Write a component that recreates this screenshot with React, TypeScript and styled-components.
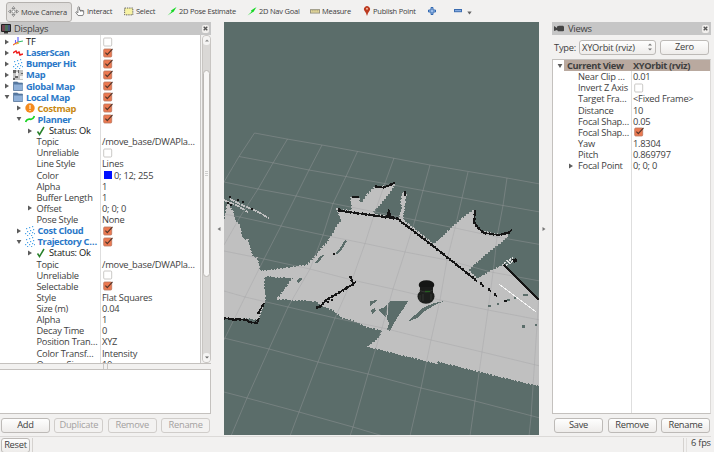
import React from 'react';
import styled, { createGlobalStyle, css } from 'styled-components';

const GlobalStyle = createGlobalStyle`
  * { box-sizing: border-box; }
  body {
    margin: 0;
    background: #f2f1f0;
    color: #3e3e3e;
    font-family: "Open Sans", "Noto Sans", sans-serif;
    font-size: 9.3px;
    letter-spacing: -0.24px;
    overflow: hidden;
  }
`;

const Window = styled.div`
  width: 711px;
  height: 452px;
  display: grid;
  grid-template-rows: 22px 414px 16px;
  background: #f2f1f0;
`;

const Toolbar = styled.div`
  display: flex;
  align-items: center;
  padding-left: 6px;
  font-size: 7.5px;
  letter-spacing: -0.24px;
`;

const Tool = styled.div<{ $w: number; $active?: boolean }>`
  display: flex;
  align-items: center;
  gap: 2px;
  width: ${p => p.$w}px;
  height: 21px;
  padding-left: 3px;
  flex: none;
  white-space: nowrap;
  ${p => p.$active && css`
    background: linear-gradient(#dedcda, #e6e4e2);
    border: 1px solid #b4b1ae;
    border-radius: 3px;
    padding-left: 1px;
    height: 20px;
    margin-top: 1px;
  `}
  svg { flex: none; }
`;

const Main = styled.div`
  display: grid;
  grid-template-columns: 211px 13px 315px 13px 159px;
`;

const Dock = styled.div`
  display: flex;
  flex-direction: column;
  min-width: 0;
  min-height: 0;
`;

const DockTitle = styled.div`
  height: 13px;
  display: flex;
  align-items: center;
  gap: 3px;
  padding: 0 2px 0 1px;
  background: #c6c6c6;
  font-size: 9.4px;
  flex: none;
  span { flex: 1; }
`;

const CloseBox = styled.div`
  width: 7px;
  height: 8px;
  border-radius: 2px;
  background: #f1efed;
  display: grid;
  place-items: center;
`;

const Gutter = styled.div<{ $right?: boolean }>`
  display: flex;
  align-items: center;
  justify-content: ${p => (p.$right ? 'flex-start' : 'flex-end')};
  padding: 0 3px;
`;

const TreeFrame = styled.div`
  display: flex;
  height: 329px;
  flex: none;
  border-bottom: 1px solid #c4c1be;
`;

const Tree = styled.div<{ $split: number }>`
  flex: 1;
  min-width: 0;
  min-height: 0;
  overflow: hidden;
  padding-top: 1px;
  background: linear-gradient(to right, #fff ${p => p.$split}px, #dedede ${p => p.$split}px, #dedede ${p => p.$split + 1}px, #fff ${p => p.$split + 1}px);
  border-right: 1px solid #c9c7c5;
`;

const ViewTree = styled(Tree)`
  border: 1px solid #c4c1be;
  border-right: 1px solid #dddbd9;
  padding-top: 0;
`;

const Line = styled.div<{ $split: number; $current?: boolean }>`
  display: grid;
  grid-template-columns: ${p => p.$split}px 1fr;
  height: 11.13px;
  line-height: 11px;
  white-space: nowrap;
  ${p => p.$current && css`
    background: linear-gradient(to right, #fff 11px, #b9a99f 11px);
    font-weight: 700;
    letter-spacing: -0.36px;
  `}
`;

const NameCell = styled.div<{ $x: number; $tone?: string }>`
  display: flex;
  align-items: center;
  padding-left: ${p => p.$x}px;
  color: ${p => p.$tone || 'inherit'};
  ${p => p.$tone && p.$tone !== '#111' && css`font-weight: 700; letter-spacing: -0.36px;`}
  svg { flex: none; }
`;

const Slot = styled.div<{ $w: number }>`
  width: ${p => p.$w}px;
  flex: none;
  display: flex;
  align-items: center;
`;

const ValueCell = styled.div`
  display: flex;
  align-items: center;
  padding-left: 2px;
`;

const Swatch = styled.i`
  width: 8px;
  height: 8px;
  margin: 0 2px 0 2px;
  background: #0010ff;
`;

const ScrollTrack = styled.div`
  width: 9px;
  margin-left: 1px;
  background: #dad8d6;
  display: flex;
  flex-direction: column;
  align-items: center;
  justify-content: space-between;
  border-radius: 4px;
  border: 1px solid #c8c5c2;
`;

const ScrollCap = styled.div`
  width: 7px;
  height: 9px;
  display: grid;
  place-items: center;
  background: #f5f4f3;
  border-radius: 3px;
`;

const ScrollThumb = styled.div`
  width: 7px;
  height: 207px;
  margin: 25px 0 auto;
  border-radius: 4px;
  border: 1px solid #bbb8b5;
  background: #f8f7f6;
  display: grid;
  place-items: center;
`;

const Grip = styled.div`
  height: 5px;
  width: 5px;
  border: solid #c9c6c3;
  border-width: 0 1px;
  align-self: center;
  flex: none;
`;

const Description = styled.div`
  height: 45px;
  flex: none;
  background: #fff;
  border: 1px solid #c4c1be;
  border-left: 0;
`;

const ButtonRow = styled.div`
  display: grid;
  grid-auto-flow: column;
  grid-auto-columns: 1fr;
  gap: 4.5px;
  padding: 4px 1px 0 1px;
`;

const ViewButtons = styled(ButtonRow)`
  padding: 4px 1px 3px 2px;
`;

const Button = styled.button<{ $w?: number }>`
  height: 15px;
  width: ${p => (p.$w ? `${p.$w}px` : 'auto')};
  padding: 0 0 1px;
  border: 1px solid #bdbab7;
  border-radius: 3px;
  background: linear-gradient(#fefefe, #eeecea);
  color: #3e3e3e;
  font: inherit;
  letter-spacing: inherit;
  line-height: 12px;
  flex: none;
  &:disabled { color: #a3a19f; border-color: #d0cdca; background: #f3f2f1; }
`;

const TypeBar = styled.div`
  display: flex;
  align-items: center;
  height: 24px;
  gap: 4px;
  padding: 0 2px;
  flex: none;
  span { width: 21px; }
`;

const Combo = styled.div`
  width: 77px;
  height: 15px;
  display: flex;
  align-items: center;
  justify-content: space-between;
  padding: 0 3px 0 2px;
  border: 1px solid #bdbab7;
  border-radius: 3px;
  background: linear-gradient(#fefefe, #eeecea);
`;

const StatusBar = styled.div`
  display: flex;
  gap: 2px;
  padding: 1px 0 0 1px;
  border-top: 1px solid #dcdad8;
`;

const StatusPane = styled.div`
  flex: 1;
  border: solid #d5d2cf;
  border-width: 0 1px;
`;

const Fps = styled.div`
  width: 25px;
  padding-left: 4px;
  line-height: 10px;
  white-space: nowrap;
  border-left: 1px solid #e1dfdd;
`;

const Scene = styled.svg`
  display: block;
  width: 315px;
  height: 413px;
`;

function Arrow({ open }: { open?: boolean }) {
  return (
    <svg width="6" height="6" viewBox="0 0 6 6" fill="#5c5c5c">
      <path d={open ? 'M.6 1h4.8L3 5z' : 'M1 .6v4.8L5 3z'} />
    </svg>
  );
}

function Check({ on }: { on: boolean }) {
  return (
    <svg width="11" height="10" viewBox="0 0 11 10">
      <rect x="1.7" y="1" width="8" height="8" rx="1" fill={on ? '#ec7951' : '#fff'} stroke={on ? '#b9765e' : '#bdbab8'} strokeWidth=".8" />
      {on && <path d="M3.4 4.6l1.9 2.1L10.5.9" fill="none" stroke="#55362a" strokeWidth="1.2" />}
    </svg>
  );
}

function Icon({ kind }: { kind: string }) {
  const art: Record<string, React.ReactNode> = {
    tf: <g fill="none" strokeWidth="1.1"><path d="M5 5V0" stroke="#55f" /><path d="M5 5l5-1" stroke="#3b6" /><path d="M5 5L0 8" stroke="#e63" /><path d="M2.5 6V3" stroke="#66f" /><path d="M3 7l3-1" stroke="#db3" /></g>,
    laser: <path d="M0 5l3-2 1 2 2-1 1 3 3-1" fill="none" stroke="#ee1c1c" strokeWidth="1.5" />,
    cloud: <g fill="#4da3e8">{[[1, 2], [4, 1], [7, 0], [8, 3], [5, 4], [2, 5], [0, 7], [4, 7], [7, 6], [9, 7], [6, 9], [2, 9]].map(([x, y]) => <rect key={`${x}${y}`} x={x} y={y} width="1.2" height="1.2" />)}</g>,
    map: <g><rect width="10" height="10" fill="#c4c4c4" /><path d="M0 0h3v3H0zM5 0h1v3H5zM8 3h2v1H8zM2 6h3v2H2zM0 8h2v2H0z" fill="#666" /><path d="M3 2h2v4H3zM7 6h3v3H7z" fill="#f2f2f2" /></g>,
    folder: <g><path d="M.5 1h4l1 1h4v7.5h-9z" fill="#5678a0" stroke="#52729a" strokeWidth=".7" /><path d="M1 3.5h8.7V9H1z" fill="#8fb0d8" /></g>,
    warn: <g><circle cx="5" cy="5" r="4.7" fill="#f58a1d" /><path d="M5 2v4M5 7v1" stroke="#fff1dc" strokeWidth="1.2" /></g>,
    path: <path d="M.5 8Q2 4.6 5 5.2T9.5 2" fill="none" stroke="#17d321" strokeWidth="1.8" />,
    ok: <path d="M1.5 5.5l2 3L8 1" fill="none" stroke="#288029" strokeWidth="1.5" />,
  };
  return <svg width="10" height="10" viewBox="0 0 10 10">{art[kind]}</svg>;
}

function ToolIcon({ kind }: { kind: string }) {
  if (kind === 'move') return <svg width="11" height="11" viewBox="0 0 11 11" fill="#fafafa" stroke="#777" strokeWidth=".8"><path d="M5.5.5L7 2.5H4zM5.5 10.5L4 8.5h3zM.5 5.5L2.5 4v3zM10.5 5.5L8.5 7V4z" /><circle cx="5.5" cy="5.5" r="1.7" /></svg>;
  if (kind === 'hand') return <svg width="10" height="12" viewBox="0 0 11 12" fill="#fff" stroke="#555" strokeWidth=".8"><path d="M3.2 8V2q1.2-1.4 1.8 0v3l4.5.7V9L8.5 11h-5L.8 7.5 2 6.8z" /><path d="M6 5v1.7M7.8 5.3V7" /></svg>;
  if (kind === 'select') return <svg width="10" height="9" viewBox="0 0 11 9"><rect x=".7" y=".7" width="9" height="7.5" fill="#f7f2a4" stroke="#555" strokeDasharray="1.5 1" /></svg>;
  if (kind === 'arrow') return <svg width="10" height="9" viewBox="0 0 10 9"><path d="M.5 8.5l4-3.8L4 3.6 9.5 0 6.4 5 5.5 5.2z" fill="#14d822" /></svg>;
  if (kind === 'ruler') return <svg width="10" height="5" viewBox="0 0 11 5"><rect x=".5" y=".5" width="10" height="3.7" fill="#e9dda0" stroke="#908c7a" /><path d="M2.5 1v1.5M4.5 1v1.5M6.5 1v1.5M8.5 1v1.5" stroke="#887f58" strokeWidth=".6" /></svg>;
  if (kind === 'pin') return <svg width="8" height="10" viewBox="0 0 8 10"><path d="M4 10Q3.4 7 1.6 5A3 3 0 1 1 6.4 5Q4.6 7 4 10z" fill="#bd3a20" /><circle cx="4" cy="2.8" r="1" fill="#f4b9a0" /></svg>;
  if (kind === 'plus') return <svg width="8" height="8" viewBox="0 0 8 8"><path d="M3 .5h2V3h2.5v2H5v2.5H3V5H.5V3H3z" fill="#9cbde9" stroke="#3268b0" /></svg>;
  return <svg width="8" height="4" viewBox="0 0 8 4"><rect x=".5" y=".5" width="7" height="2.2" fill="#85abe0" stroke="#3b6cb0" /></svg>;
}

const MenuArrow = styled.svg`
  margin: 3px 0 0 3px;
`;

function Close() {
  return <CloseBox><svg width="5" height="5" viewBox="0 0 5 5"><path d="M.7.7l3.6 3.6M4.3.7L.7 4.3" stroke="#555" strokeWidth="1.3" /></svg></CloseBox>;
}

type Item = { name: string; x: number; arrow?: 'open' | 'shut'; icon?: string; tone?: string; value?: string; on?: boolean; swatch?: boolean };
const blue = '#2a78c8';

const displays: Item[] = [
  { name: 'TF', x: 4, arrow: 'shut', icon: 'tf', tone: '#111', on: false },
  { name: 'LaserScan', x: 4, arrow: 'shut', icon: 'laser', tone: blue, on: true },
  { name: 'Bumper Hit', x: 4, arrow: 'shut', icon: 'cloud', tone: blue, on: true },
  { name: 'Map', x: 4, arrow: 'shut', icon: 'map', tone: blue, on: true },
  { name: 'Global Map', x: 4, arrow: 'shut', icon: 'folder', tone: blue, on: true },
  { name: 'Local Map', x: 4, arrow: 'open', icon: 'folder', tone: blue, on: true },
  { name: 'Costmap', x: 15.5, arrow: 'shut', icon: 'warn', tone: '#c98912', on: true },
  { name: 'Planner', x: 15.5, arrow: 'open', icon: 'path', tone: blue, on: true },
  { name: 'Status: Ok', x: 27, arrow: 'shut', icon: 'ok', tone: '#111' },
  { name: 'Topic', x: 36.5, value: '/move_base/DWAPla…' },
  { name: 'Unreliable', x: 36.5, on: false },
  { name: 'Line Style', x: 36.5, value: 'Lines' },
  { name: 'Color', x: 36.5, value: '0; 12; 255', swatch: true },
  { name: 'Alpha', x: 36.5, value: '1' },
  { name: 'Buffer Length', x: 36.5, value: '1' },
  { name: 'Offset', x: 26.5, arrow: 'shut', value: '0; 0; 0' },
  { name: 'Pose Style', x: 36.5, value: 'None' },
  { name: 'Cost Cloud', x: 15.5, arrow: 'shut', icon: 'cloud', tone: blue, on: true },
  { name: 'Trajectory C…', x: 15.5, arrow: 'open', icon: 'cloud', tone: blue, on: true },
  { name: 'Status: Ok', x: 27, arrow: 'shut', icon: 'ok', tone: '#111' },
  { name: 'Topic', x: 36.5, value: '/move_base/DWAPla…' },
  { name: 'Unreliable', x: 36.5, on: false },
  { name: 'Selectable', x: 36.5, on: true },
  { name: 'Style', x: 36.5, value: 'Flat Squares' },
  { name: 'Size (m)', x: 36.5, value: '0.04' },
  { name: 'Alpha', x: 36.5, value: '1' },
  { name: 'Decay Time', x: 36.5, value: '0' },
  { name: 'Position Tran…', x: 36.5, value: 'XYZ' },
  { name: 'Color Transf…', x: 36.5, value: 'Intensity' },
  { name: 'Queue Size', x: 36.5, value: '10' },
];

const views: Item[] = [
  { name: 'Current View', x: 4, arrow: 'open', value: 'XYOrbit (rviz)' },
  { name: 'Near Clip …', x: 25, value: '0.01' },
  { name: 'Invert Z Axis', x: 25, on: false },
  { name: 'Target Fra…', x: 25, value: '<Fixed Frame>' },
  { name: 'Distance', x: 25, value: '10' },
  { name: 'Focal Shap…', x: 25, value: '0.05' },
  { name: 'Focal Shap…', x: 25, on: true },
  { name: 'Yaw', x: 25, value: '1.8304' },
  { name: 'Pitch', x: 25, value: '0.869797' },
  { name: 'Focal Point', x: 15, arrow: 'shut', value: '0; 0; 0' },
];

function Rows({ items, split, headed }: { items: Item[]; split: number; headed?: boolean }) {
  return (
    <>
      {items.map((it, i) => (
        <Line key={i} $split={split} $current={headed && i === 0}>
          <NameCell $x={it.x} $tone={it.tone}>
            {it.arrow && <Slot $w={it.icon ? 9 : 10}><Arrow open={it.arrow === 'open'} /></Slot>}
            {it.icon && <Slot $w={13}><Icon kind={it.icon} /></Slot>}
            {it.name}
          </NameCell>
          <ValueCell>
            {it.on !== undefined && <Check on={it.on} />}
            {it.swatch && <Swatch />}
            {it.value}
          </ValueCell>
        </Line>
      ))}
    </>
  );
}

const gridLines = [
  '254.5,133 287,139 322,145 358,151.5 430,165 507,178 540,184',
  '239,156.5 274,163 309,170 346,176.5 423,190.5 503,205.5 540,212',
  '224,182 258,189 296,196 333,203.5 415,220 455,228 497,237 540,244.5',
  '224,214 240,217 281,226 323,235 365,243.5 405,252 447,260 491,272 540,281',
  '224,251 264,259 310,269 352,280 393,289 440,300 488,310 540,320',
  '224,291 245,297 288,307 335,318 383,328 431,340 482,352 540,366',
  '224,338 269,349 318,362 368,374 421,388 475,401 540,418',
  '224,392 247,398 299,412 353,427 383,436',
  '254.5,133 239,156.5 224,182',
  '287.5,139 273,163 258,189 240,217 224,245',
  '322,145 309,170 296,196 281,226 264,259 245,297 224,340',
  '357.5,151.5 346,176.5 333,203.5 323,235 310,269 288,307 269,349 247,398 231,436',
  '394,158 385,183 375,212 365,243.5 352,280 335,318 318,362 299,412 290,436',
  '430,165 423,190.5 415,220 405,252 393,289 382,328 368,374 353,427 350,436',
  '468,172 462,198 455,228 447,260 440,300 431,340 421,388 410,436',
  '507,178 503,205.5 497,237 494,265 488,310 482,352 475,401 470,436',
  '540,280 536,340 531,417 529,436',
];

const freeSpace = [
  'M228 202L230 207 233 212 235 220 239 225 241 230 242 239 248 240 250 248 253 257 257 258 260 271.5 280 269 305 265.5 307 265 312 260 317 255 320 250 328 242 330 238 334 232 336 228 340 222 342 220 339 214 337 209 352 211 351 198 359 197 359 202 362 203 366 196 375 187 385 186 395 184 390 192 382 202 372 213 387 217 399 219 402 208 401 202 403 192 406 195 404 207 403 220 433 244 440 240 448 231 463 218 474 210 474 222 480 230 493 234 508 235 500 243 487 253 477 262 468 270 477 279 493 270 503 265 518 279 540 301V386L512 379.5 437 361V363.5L368 346.5 377 340 381 335 382 330 367 327 353 320 343 318 333 310 320 305 317 301 277 299 280 296 285 289 293 278 264 276 265 301 258 320 249 318 237 319 224 317V222z',
];

const unknown = [
  'M390 301h18l-4 7-5 7-5 8-4 8-3-1 2-7-4-7-7-6 7-3z',
  'M407 322l8-7 8-7 11-5 10-2-9 4-10 6-8 7z',
  'M370 301l7-1-3 3-4 3zM371 310l4-2 1 3-4 3z',
  'M315 263l3-4 2-3 4-1-3 4-3 4zM335 253l5-5 5-8 2 1-5 8-5 5zM296 281l4-3 3 1-5 4z',
];

const walls = [
  'M224 318l11 2 2-1 10 1 2 2 8 1 2-5M258 314l6-11',
  'M338 209l4 2 57 8M338 211l5 0', 'M375 186.5l8 1 6-2 6-3M387 217l2-5 2 5 9 3',
  'M352 197l7 0', 'M405 191v5',
  'M399 220l34 26 44 35M480 283l4 3M488 289l3 2M494 294l3 2',
  'M475 210l-1 12 4 6 6 5 14 2 10-2 4-3', 'M504 265l14 14 21 21', 'M512 261l5-1',
  'M316 308l5-2 5-6 9-5 10-6 7-4 4-3M350 276l3 7M346 288l8-4',
];

function Viewport() {
  return (
    <Scene viewBox="224 22 315 413" shapeRendering="crispEdges">
      <rect x="224" y="22" width="316" height="414" fill="#5b6d6a" />
      {freeSpace.map(d => <path key={d} d={d} fill="#c0c0c0" stroke="#c0c0c0" strokeWidth="1.6" strokeDasharray="1.6 1.6" />)}
      <path d="M230 199l12 6 14 6 13 7M224 200l12 5 12 7" fill="none" stroke="#c0c0c0" strokeWidth="1.7" strokeDasharray="5 1" />
      {unknown.map(d => <path key={d} d={d} fill="#5b6d6a" />)}
      <path d="M388 303l-1 12-2 10" stroke="#c0c0c0" fill="none" />
      {gridLines.map(p => <polyline key={p} points={p} fill="none" stroke="#a0a0a4" strokeOpacity=".48" strokeWidth=".8" shapeRendering="auto" />)}
      {walls.map(d => <path key={d} d={d} fill="none" stroke="#151515" strokeWidth="1.7" />)}
      {walls.map(d => <path key={`edge${d}`} d={d} fill="none" stroke="#151515" strokeWidth="2.8" strokeDasharray="1.5 2.5" />)}
      <path d="M229 196h2v2h-2zM237 199h2v2h-2zM242 201h2v2h-2zM227 202h2v2h-2zM230 204h2v2h-2zM251 208h2v2h-2zM333 253h2v2h-2zM327 301h2v2h-2zM331 299h2v2h-2zM504 300h3v2h-3z" fill="#151515" />
      <path d="M488 305h3v2h-3zM497 303h2v2h-2zM507 299h3v2h-3zM523 294h5v2h-5zM514 297h2v2h-2zM522 325h3v3h-3zM535 324h2v2h-2z" fill="#5b6d6a" />
      <path d="M504 263l9-5M506 265l7-4" stroke="#ddd" strokeWidth="2" strokeDasharray="2 1" />
      <path d="M513 260l3-1M514 262l3-1" stroke="#151515" strokeWidth="1.5" />
      <path d="M499 284l37 28" stroke="#f5f5f5" strokeWidth="1" />
      <g shapeRendering="auto">
        <ellipse cx="426.5" cy="285" rx="7.8" ry="4.8" fill="#151615" />
        <path d="M420 287h13v6h-13z" fill="#1b1c1b" />
        <ellipse cx="426" cy="296.5" rx="8.5" ry="7.3" fill="#1d1f1d" />
        <path d="M419 290q7 4 14 0M420 295v6M423 294v7M431 294v6" fill="none" stroke="#4a4f49" strokeWidth=".5" />
        <path d="M425 291.5h5" stroke="#255c20" strokeWidth="1.3" />
      </g>
    </Scene>
  );
}

const tools = [
  { label: 'Move Camera', icon: 'move', w: 66, active: true },
  { label: 'Interact', icon: 'hand', w: 49 },
  { label: 'Select', icon: 'select', w: 43 },
  { label: '2D Pose Estimate', icon: 'arrow', w: 80 },
  { label: '2D Nav Goal', icon: 'arrow', w: 63 },
  { label: 'Measure', icon: 'ruler', w: 53 },
  { label: 'Publish Point', icon: 'pin', w: 65 },
  { label: '', icon: 'plus', w: 26 },
  { label: '', icon: 'minus', w: 22 },
];

export default function App() {
  return (
    <>
      <GlobalStyle />
      <Window>
        <Toolbar>
          {tools.map(t => (
            <Tool key={t.icon + t.label} $w={t.w} $active={t.active}><ToolIcon kind={t.icon} />{t.label}
              {t.icon === 'minus' && <MenuArrow width="5" height="4" viewBox="0 0 5 4"><path d="M.3.5h4.4L2.5 3.6z" fill="#666" /></MenuArrow>}
            </Tool>
          ))}
        </Toolbar>
        <Main>
          <Dock>
            <DockTitle>
              <svg width="10" height="10" viewBox="0 0 10 10"><rect width="10" height="8" rx="1" fill="#222" /><path d="M1 1h3v6H1z" fill="#704553" /><path d="M4 1h3v6H4z" fill="#48705a" /><path d="M7 1h2v6H7z" fill="#46527e" /><path d="M3 8h4v1.5H3z" fill="#333" /></svg>
              <span>Displays</span><Close />
            </DockTitle>
            <TreeFrame>
              <Tree $split={100}><Rows items={displays} split={100} /></Tree>
              <ScrollTrack>
                <ScrollCap><svg width="4" height="3" viewBox="0 0 4 3"><path d="M0 2.5h4L2 .5z" fill="#888" /></svg></ScrollCap>
                <ScrollThumb><svg width="3" height="5" viewBox="0 0 3 5"><path d="M0 .5h3M0 2.5h3M0 4.5h3" stroke="#bbb" strokeWidth=".7" /></svg></ScrollThumb>
                <ScrollCap><svg width="4" height="3" viewBox="0 0 4 3"><path d="M0 .5h4L2 2.5z" fill="#666" /></svg></ScrollCap>
              </ScrollTrack>
            </TreeFrame>
            <Grip />
            <Description />
            <ButtonRow>
              <Button>Add</Button><Button disabled>Duplicate</Button><Button disabled>Remove</Button><Button disabled>Rename</Button>
            </ButtonRow>
          </Dock>
          <Gutter><svg width="4" height="6" viewBox="0 0 4 6"><path d="M3.5 1v4L.5 3z" fill="#777" /></svg></Gutter>
          <Viewport />
          <Gutter $right><svg width="4" height="6" viewBox="0 0 4 6"><path d="M.5 1v4l3-2z" fill="#777" /></svg></Gutter>
          <Dock>
            <DockTitle>
              <svg width="12" height="7" viewBox="0 0 12 7"><path d="M1 1l3 2V1.5L6 .7h4l1 1v4l-1 .6H5L4 5 1 6z" fill="#444" /></svg>
              <span>Views</span><Close />
            </DockTitle>
            <TypeBar>
              <span>Type:</span>
              <Combo>XYOrbit (rviz)<svg width="4" height="8" viewBox="0 0 4 8"><path d="M0 2.5h4L2 .5zM0 5.5h4l-2 2z" fill="#777" /></svg></Combo>
              <Button $w={49}>Zero</Button>
            </TypeBar>
            <ViewTree $split={78}><Rows items={views} split={78} headed /></ViewTree>
            <ViewButtons><Button>Save</Button><Button>Remove</Button><Button>Rename</Button></ViewButtons>
          </Dock>
        </Main>
        <StatusBar>
          <Button $w={29}>Reset</Button>
          <StatusPane />
          <Fps>6 fps</Fps>
        </StatusBar>
      </Window>
    </>
  );
}
